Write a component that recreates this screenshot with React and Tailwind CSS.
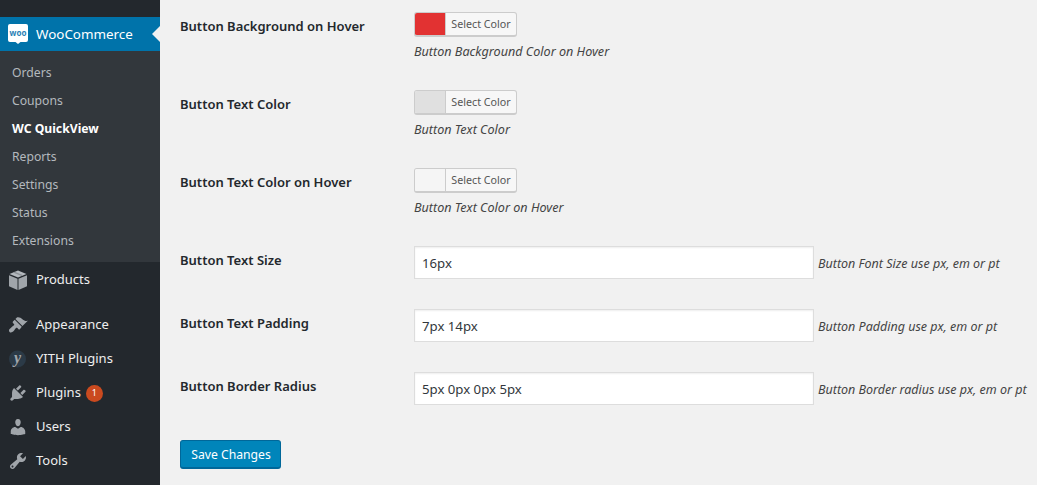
const font = { fontFamily: '"Noto Sans", "Open Sans", sans-serif' };

const WooIcon = () => (
  <svg width="20" height="20" viewBox="0 0 20 20" className="shrink-0">
    <path d="M2 0h16a2 2 0 0 1 2 2v14a2 2 0 0 1-2 2h-5.500L10 20l-2.500-2H2a2 2 0 0 1-2-2V2a2 2 0 0 1 2-2z" fill="#fff" />
    <text x="10" y="11.500" textAnchor="middle" fontSize="8" fontWeight="700" fill="#2a7fb5" fontFamily="Noto Sans">woo</text>
  </svg>
);

const BoxIcon = () => (
  <svg width="20" height="20" viewBox="0 0 20 20" fill="#a0a5aa">
    <path d="M10 0.500 18.500 4 10 7.500 1.500 4z" fill="#b4b9be" />
    <path d="M1 5.200 9.500 8.700V20L1 16.300z" />
    <path d="M10.500 8.700 19 5.200v11.100L10.500 20z" />
    <path d="M5 2.400 13.500 6l1.800-.7L6.800 1.700z" fill="#8a8f94" />
  </svg>
);

const BrushIcon = () => (
  <svg width="20" height="20" viewBox="0 0 20 20" fill="#a0a5aa">
    <path d="M14.480 11.060L7.410 3.990l1.500-1.500c.5-.56 2.300-.47 3.510.32 1.210.8 1.430 1.280 2.910 2.100 1.180.64 2.450 1.260 4.450.85zm-.71.71L6.700 4.700 4.930 6.470c-.39.39-.39 1.020 0 1.410l1.060 1.060c.39.39.39 1.030 0 1.420-.6.6-1.430 1.110-2.210 1.690-.35.26-.7.53-1.010.84C1.430 13.710.96 14.590.96 15.500c0 .55.22 1.050.59 1.410.36.37.86.59 1.410.59.92 0 1.790-.47 2.490-1.160.31-.31.58-.66.84-1.010.58-.78 1.090-1.610 1.690-2.210.39-.39 1.030-.39 1.420 0l1.060 1.060c.39.39 1.020.39 1.410 0z" />
  </svg>
);

const YithIcon = () => (
  <svg width="20" height="20" viewBox="0 0 20 20">
    <circle cx="9.500" cy="10" r="8.500" fill="#2b3a47" />
    <text x="9.500" y="14" textAnchor="middle" fontSize="16" fontWeight="700" fontStyle="italic" fill="#a0a5aa" fontFamily="Liberation Serif">y</text>
  </svg>
);

const PlugIcon = () => (
  <svg width="20" height="20" viewBox="0 0 20 20" fill="#a0a5aa">
    <path d="M13.110 4.360L9.870 7.600 8 5.730l3.240-3.240c.35-.34 1.050-.2 1.560.32.52.51.66 1.210.31 1.550zm-8 1.770l.91-1.120 9.010 9.010-1.190.84c-.71.71-2.630 1.160-3.820 1.160H6.140L4.900 17.260c-.59.59-1.540.59-2.120 0-.59-.58-.59-1.530 0-2.120l1.240-1.240v-3.880c0-1.130.4-3.190 1.090-3.890zm7.260 3.970l3.240-3.240c.34-.35 1.040-.21 1.550.31.52.51.66 1.210.31 1.550l-3.240 3.250z" />
  </svg>
);

const UserIcon = () => (
  <svg width="20" height="20" viewBox="0 0 20 20" fill="#a0a5aa">
    <path d="M10 9.250c-2.270 0-2.730-3.440-2.730-3.440C7 4.020 7.820 2 9.970 2c2.160 0 2.980 2.020 2.710 3.810 0 0-.41 3.440-2.680 3.440zm0 2.570L12.720 10c2.390 0 4.520 2.330 4.520 4.530v2.490s-3.650 1.130-7.240 1.130c-3.650 0-7.240-1.130-7.240-1.130v-2.490c0-2.250 1.940-4.480 4.470-4.480z" />
  </svg>
);

const WrenchIcon = () => (
  <svg width="20" height="20" viewBox="0 0 20 20" fill="#a0a5aa">
    <path d="M16.680 9.770c-1.340 1.340-3.300 1.670-4.950.99l-5.410 6.520c-.99.99-2.590.99-3.580 0s-.99-2.590 0-3.570l6.520-5.420c-.68-1.650-.35-3.610.99-4.950 1.280-1.280 3.120-1.620 4.720-1.060l-2.890 2.890 2.820 2.820 2.860-2.870c.53 1.580.18 3.390-1.080 4.650zM3.810 16.210c.4.39 1.040.39 1.430 0 .4-.4.4-1.040 0-1.430-.39-.4-1.030-.4-1.430 0-.39.39-.39 1.030 0 1.430z" />
  </svg>
);

const Orders = ["Orders", "Coupons", "WC QuickView", "Reports", "Settings", "Status", "Extensions"];

const MenuItem = ({ icon, label, badge }) => (
  <div className="flex items-center h-[34px] pl-[8px]">
    <span className="w-[20px] h-[20px] flex items-center justify-center">{icon}</span>
    <span className="ml-[8px] text-[13px] text-[#eeeeee]">{label}</span>
    {badge && (
      <span className="ml-[5px] w-[17px] h-[17px] rounded-full bg-[#ca4a1f] text-white text-[9px] flex items-center justify-center">
        {badge}
      </span>
    )}
  </div>
);

const Sidebar = () => (
  <aside className="w-[160px] shrink-0 bg-[#23282d] pt-[17px]">
    <div className="relative flex items-center h-[34px] pl-[8px] bg-[#0073aa] text-white text-[13.400px]">
      <WooIcon />
      <span className="ml-[8px]">WooCommerce</span>
      <span className="absolute right-0 top-[9px] w-0 h-0 border-y-[8px] border-y-transparent border-r-[8px] border-r-[#f1f1f1]" />
    </div>
    <div className="bg-[#32373c] pt-[8px] pb-[7px]">
      {Orders.map((item) => (
        <div
          key={item}
          className={
            item === "WC QuickView"
              ? "h-[28px] pl-[12px] flex items-center text-[12.200px] font-bold text-white"
              : "h-[28px] pl-[12px] flex items-center text-[12.200px] text-[#b4b9be]"
          }
        >
          {item}
        </div>
      ))}
    </div>
    <div className="pt-[1px]">
      <MenuItem icon={<BoxIcon />} label="Products" />
    </div>
    <div className="h-[11px]" />
    <MenuItem icon={<BrushIcon />} label="Appearance" />
    <MenuItem icon={<YithIcon />} label="YITH Plugins" />
    <MenuItem icon={<PlugIcon />} label="Plugins" badge="1" />
    <MenuItem icon={<UserIcon />} label="Users" />
    <MenuItem icon={<WrenchIcon />} label="Tools" />
  </aside>
);

const ColorRow = ({ label, color, hint }) => (
  <div className="flex h-[78px]">
    <div className="w-[234px] pt-[5px] text-[13px] font-semibold text-[#23282d] leading-[18px]">{label}</div>
    <div>
      <div className="flex w-[103px] h-[25px] border border-[#cccccc] rounded-[3px] bg-[#f7f7f7] overflow-hidden border-b-2">
        <span className="w-[31px] border-r border-[#cccccc]" style={{ backgroundColor: color }} />
        <span className="flex-1 text-center text-[10.700px] leading-[22px] text-[#555555]">Select Color</span>
      </div>
      <div className="mt-[6px] text-[12.600px] italic leading-[18px] text-[#444444]">{hint}</div>
    </div>
  </div>
);

const TextRow = ({ label, value, hint }) => (
  <div className="flex h-[63px]">
    <div className="w-[234px] pt-[5px] text-[13px] font-semibold text-[#23282d] leading-[18px]">{label}</div>
    <input
      readOnly
      value={value}
      style={font}
      className="w-[400px] h-[33px] px-[7px] bg-white border border-[#dddddd] text-[13.200px] text-[#32373c] outline-none shadow-[inset_0_1px_2px_rgba(0,0,0,0.07)]"
    />
    <div className="ml-[4px] h-[33px] pt-[3px] flex items-center text-[12.500px] italic text-[#444444] whitespace-nowrap">{hint}</div>
  </div>
);

export default function App() {
  return (
    <div className="flex w-[1037px] h-[485px] overflow-hidden bg-[#f1f1f1]" style={font}>
      <Sidebar />
      <main className="flex-1 pl-[20px] pt-[12px]">
        <ColorRow label="Button Background on Hover" color="#e23232" hint="Button Background Color on Hover" />
        <ColorRow label="Button Text Color" color="#e0e0e0" hint="Button Text Color" />
        <ColorRow label="Button Text Color on Hover" color="#f5f5f5" hint="Button Text Color on Hover" />
        <TextRow label="Button Text Size" value="16px" hint="Button Font Size use px, em or pt" />
        <TextRow label="Button Text Padding" value="7px 14px" hint="Button Padding use px, em or pt" />
        <TextRow label="Button Border Radius" value="5px 0px 0px 5px" hint="Button Border radius use px, em or pt" />
        <button className="mt-[5px] w-[101px] h-[29px] pt-[2px] pl-[1px] rounded-[3px] bg-[#0085ba] border border-[#006799] border-b-2 text-white text-[12.200px]">
          Save Changes
        </button>
      </main>
    </div>
  );
}
